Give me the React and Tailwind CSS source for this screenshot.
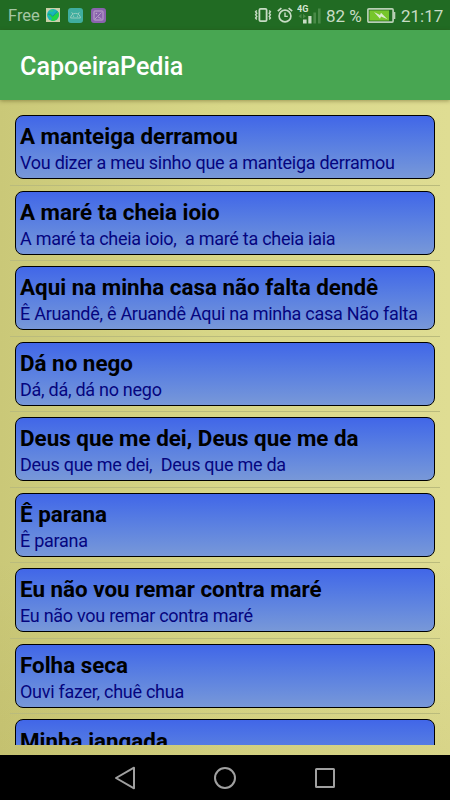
const SONGS = [
  { title: "A manteiga derramou", verse: "Vou dizer a meu sinho que a manteiga derramou" },
  { title: "A maré ta cheia ioio", verse: "A maré ta cheia ioio,  a maré ta cheia iaia" },
  { title: "Aqui na minha casa não falta dendê", verse: "Ê Aruandê, ê Aruandê Aqui na minha casa Não falta" },
  { title: "Dá no nego", verse: "Dá, dá, dá no nego" },
  { title: "Deus que me dei, Deus que me da", verse: "Deus que me dei,  Deus que me da" },
  { title: "Ê parana", verse: "Ê parana" },
  { title: "Eu não vou remar contra maré", verse: "Eu não vou remar contra maré" },
  { title: "Folha seca", verse: "Ouvi fazer, chuê chua" },
  { title: "Minha jangada" },
];

function GlobeIcon() {
  return (
    <svg width="14" height="14" viewBox="0 0 14 14">
      <rect width="14" height="14" fill="#c9d0a8" />
      <circle cx="7" cy="7" r="6" fill="#19b7b9" />
      <path d="M1.5 6 L4 6 L6.5 8.5 L12.6 4 Q13.6 8 11 11 Q8 13.6 5 12.6 L6 10 Z" fill="#22d643" />
      <path d="M3 3.4 L5 1.8 L8 1.5 L6.5 4 Z" fill="#2cc98a" />
      <path d="M2 6 L4.5 6.3 L6.8 8.3 L11.5 3" fill="none" stroke="#168f8a" strokeWidth="0.9" />
    </svg>
  );
}

function AndroidIcon() {
  return (
    <svg width="15" height="15" viewBox="0 0 15 15">
      <rect width="15" height="15" rx="3" fill="#3fae9f" />
      <path d="M2.6 10 a4.9 4.6 0 0 1 9.8 0 Z M4.8 6 L3.7 4.3 M10.2 6 L11.3 4.3"
        fill="none" stroke="#9fd0c2" strokeWidth="0.9" />
      <circle cx="5.5" cy="8.2" r="0.6" fill="#9fd0c2" />
      <circle cx="9.5" cy="8.2" r="0.6" fill="#9fd0c2" />
    </svg>
  );
}

function PictureIcon() {
  return (
    <svg width="15" height="15" viewBox="0 0 15 15">
      <rect width="15" height="15" rx="3" fill="#8a63ae" />
      <rect x="3" y="3" width="9" height="9" rx="0.8" fill="none" stroke="#c3b0cf" strokeWidth="0.9" />
      <path d="M4 11 L6.5 8.5 L10.5 4.5 M7 9 L10.5 10.8" fill="none" stroke="#c3b0cf" strokeWidth="0.8" />
      <circle cx="5.4" cy="5.5" r="0.8" fill="#c3b0cf" />
    </svg>
  );
}

function VibrateIcon() {
  return (
    <svg width="18" height="16" viewBox="0 0 18 16" fill="none" stroke="#c8dcc5">
      <rect x="5.4" y="1.8" width="7.2" height="12.4" rx="1.2" strokeWidth="1.8" />
      <path d="M2.8 3.5 L1.6 4.8 L2.8 6.2 L1.6 7.8 L2.8 9.4 L1.6 11 L2.8 12.5 M15.2 3.5 L16.4 4.8 L15.2 6.2 L16.4 7.8 L15.2 9.4 L16.4 11 L15.2 12.5"
        strokeWidth="1.4" />
    </svg>
  );
}

function AlarmIcon() {
  return (
    <svg width="16" height="16" viewBox="0 0 16 16" fill="none" stroke="#c8dcc5">
      <circle cx="8" cy="9" r="5.9" strokeWidth="1.7" />
      <path d="M0.8 4.2 L4.4 1.1 M15.2 4.2 L11.6 1.1" strokeWidth="1.7" />
      <path d="M8 5.6 V9.4 H10.8" strokeWidth="1.4" />
    </svg>
  );
}

function SignalIcon() {
  return (
    <svg width="25" height="20" viewBox="0 0 25 20">
      <text x="0" y="7.5" fontSize="9" fontWeight="700" fill="#d5e4d2">4G</text>
      <path d="M1.5 12.2 L4.5 9.8 V14.6 Z M9 12.2 L6 9.8 V14.6 Z" fill="#4b8a4a" />
      <rect x="6" y="15.5" width="3.6" height="4" fill="#c8dcc5" />
      <rect x="11.3" y="12" width="3.2" height="7.5" fill="#c8dcc5" />
      <rect x="16.4" y="8.5" width="2.6" height="11" fill="#498a48" />
      <rect x="21" y="4.5" width="2.6" height="15" fill="#498a48" />
    </svg>
  );
}

function BatteryIcon() {
  return (
    <svg width="29" height="15" viewBox="0 0 29 15">
      <rect x="0.9" y="0.9" width="25.2" height="13.2" rx="1" fill="none" stroke="#b9d0b5" strokeWidth="1.7" />
      <rect x="2.4" y="2.4" width="19.6" height="10.2" fill="#77c62b" />
      <path d="M27.4 4 V11" stroke="#b9d0b5" strokeWidth="1.8" />
      <path d="M7 4 L13 7 L14 4.8 L20.5 11.2 L14 8.6 L13 10.8 Z" fill="#dcebd0" />
    </svg>
  );
}

function StatusBar() {
  return (
    <div className="flex h-[30px] shrink-0 items-center justify-between bg-[#216b23] pr-[7px] pl-2 text-[#c8dcc5]">
      <div className="flex items-center">
        <span className="mt-[2px] mr-[7px] w-[31px] text-[16.5px] leading-none text-[#a5c6a3]">Free</span>
        <GlobeIcon />
        <span className="ml-2"><AndroidIcon /></span>
        <span className="ml-2"><PictureIcon /></span>
      </div>
      <div className="flex items-center text-[17px] leading-none whitespace-nowrap">
        <VibrateIcon />
        <span className="ml-[5px]"><AlarmIcon /></span>
        <span className="-mt-[3px] ml-1"><SignalIcon /></span>
        <span className="mt-[2px] ml-[4px] w-[37px]">82 %</span>
        <span className="ml-[4px]"><BatteryIcon /></span>
        <span className="mt-[2px] ml-[5px] w-[42px]">21:17</span>
      </div>
    </div>
  );
}

function SongRow({ title, verse }) {
  return (
    <li className="h-[75.56px] shrink-0 border-b border-[#babb7c] pt-[5px]">
      <div className="mx-[5px] h-16 overflow-hidden rounded-[8px] border border-black bg-linear-to-b from-[#4166e8] to-[#7898d8] px-1 whitespace-pre">
        <h2 className="mt-[6.2px] text-[22.4px] leading-[28px] font-bold text-black">{title}</h2>
        {verse && <p className="mt-[0.8px] text-[18px] leading-[24px] tracking-[-0.27px] text-[#05057f]">{verse}</p>}
      </div>
    </li>
  );
}

function NavBar() {
  return (
    <nav className="flex h-[45px] shrink-0 items-center justify-center gap-[76px] bg-black">
      <svg width="24" height="24" viewBox="0 0 24 24" fill="none" stroke="#a0a0a0" strokeWidth="2" strokeLinejoin="round">
        <path d="M3 12 L21 1.7 V22.3 Z" />
      </svg>
      <svg width="24" height="24" viewBox="0 0 24 24" fill="none" stroke="#a0a0a0" strokeWidth="2">
        <circle cx="12" cy="12" r="10" />
      </svg>
      <svg width="24" height="24" viewBox="0 0 24 24" fill="none" stroke="#a0a0a0" strokeWidth="2">
        <rect x="3" y="3" width="18" height="18" rx="0.5" />
      </svg>
    </nav>
  );
}

export default function App() {
  return (
    <div className="flex h-[800px] w-[450px] flex-col overflow-hidden font-['Roboto',sans-serif]">
      <StatusBar />
      <header className="z-10 flex h-[70px] shrink-0 items-center bg-[#48a652] px-5 shadow-[0_1px_4px_rgba(60,50,0,0.4)]">
        <h1 className="mt-[3px] text-[25.1px] leading-none font-medium text-white">CapoeiraPedia</h1>
      </header>
      <main className="flex min-h-0 flex-1 flex-col bg-[linear-gradient(to_bottom,transparent_70%,rgba(120,100,0,0.07)),linear-gradient(to_right,#cac878,#d8d788_50%,#dfdd93)] p-[10px]">
        <ul className="flex min-h-0 flex-1 flex-col overflow-hidden">
          {SONGS.map((song) => (
            <SongRow key={song.title} {...song} />
          ))}
        </ul>
      </main>
      <NavBar />
    </div>
  );
}
